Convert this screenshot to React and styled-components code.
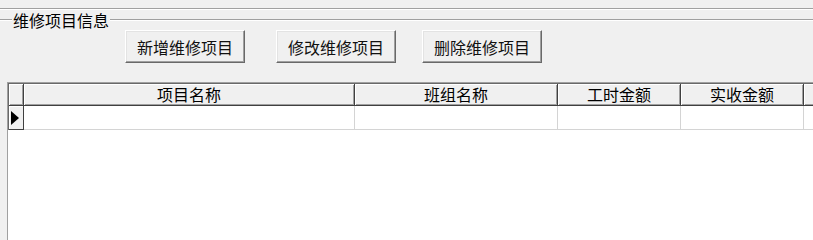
import React from "react";
import styled, { createGlobalStyle } from "styled-components";

const GlobalStyle = createGlobalStyle`
  html, body {
    margin: 0;
    padding: 0;
    height: 100%;
    overflow: hidden;
    background: #f0f0f0;
  }
  #root {
    height: 100%;
  }
`;

const columns = [
  { key: "name", title: "项目名称", width: 331 },
  { key: "team", title: "班组名称", width: 203 },
  { key: "hours", title: "工时金额", width: 123 },
  { key: "paid", title: "实收金额", width: 123 },
  { key: "extra", title: "", width: 100 },
];

const buttons = [
  { label: "新增维修项目", gap: 0 },
  { label: "修改维修项目", gap: 31 },
  { label: "删除维修项目", gap: 26 },
];

function App() {
  const template = ["15px", ...columns.map((c) => c.width + "px")].join(" ");
  return (
    <Page>
      <GlobalStyle />
      <TopRule />
      <GroupHeader>
        <Etch $width={12} />
        <GroupTitle>维修项目信息</GroupTitle>
        <Etch $grow />
      </GroupHeader>
      <ButtonRow>
        {buttons.map((b) => (
          <Button key={b.label} $gap={b.gap}>
            {b.label}
          </Button>
        ))}
      </ButtonRow>
      <Grid>
        <Rows $template={template}>
          <HeadCell />
          {columns.map((c) => (
            <HeadCell key={c.key}>{c.title}</HeadCell>
          ))}
          <Indicator>
            <Arrow />
          </Indicator>
          {columns.map((c) => (
            <DataCell key={c.key} />
          ))}
        </Rows>
      </Grid>
    </Page>
  );
}

export default App;

const Page = styled.div`
  height: 100%;
  display: flex;
  flex-direction: column;
  font-family: "Noto Sans CJK SC", "Liberation Sans", sans-serif;
  font-size: 16px;
  color: #000;
`;

const TopRule = styled.div`
  margin-top: 8px;
  height: 0;
  border-top: 1px solid #a0a0a0;
  border-bottom: 1px solid #ffffff;
`;

const GroupHeader = styled.div`
  display: flex;
  align-items: center;
  height: 18px;
  margin-top: 1px;
`;

const Etch = styled.div`
  height: 0;
  border-top: 1px solid #a0a0a0;
  border-bottom: 1px solid #ffffff;
  flex: ${(p) => (p.$grow ? 1 : "none")};
  width: ${(p) => (p.$width ? p.$width + "px" : "auto")};
`;

const GroupTitle = styled.span`
  line-height: 18px;
  padding: 0 1px;
`;

const ButtonRow = styled.div`
  display: flex;
  padding-left: 125px;
  margin-top: 1px;
`;

const Button = styled.button`
  box-sizing: border-box;
  width: 120px;
  height: 33px;
  margin-left: ${(p) => p.$gap}px;
  padding: 1px 0 0;
  font-family: inherit;
  font-size: 16px;
  color: #111;
  background: #f0f0f0;
  border: 1px solid;
  border-color: #ffffff #696969 #696969 #ffffff;
  box-shadow: inset -1px -1px 0 #a0a0a0, inset 1px 1px 0 #e3e3e3;
  cursor: pointer;
`;

const Grid = styled.div`
  flex: 1;
  margin-top: 19px;
  margin-left: 7px;
  background: #ffffff;
  border-left: 1px solid #a0a0a0;
  border-top: 1px solid #a0a0a0;
  overflow: hidden;
`;

const Rows = styled.div`
  display: grid;
  grid-template-columns: ${(p) => p.$template};
  grid-template-rows: 22px 24px;
  border-left: 1px solid #696969;
  border-top: 1px solid #696969;
  width: max-content;
`;

const HeadCell = styled.div`
  box-sizing: border-box;
  background: #f0f0f0;
  border-right: 1px solid #404040;
  border-bottom: 1px solid #404040;
  box-shadow: inset 1px 1px 0 #ffffff, inset -1px -1px 0 #a0a0a0;
  display: flex;
  align-items: center;
  justify-content: center;
  line-height: 20px;
  padding-bottom: 2px;
  white-space: nowrap;
`;

const Indicator = styled.div`
  box-sizing: border-box;
  background: #f0f0f0;
  border-right: 1px solid #404040;
  border-bottom: 1px solid #404040;
  box-shadow: inset 1px 1px 0 #ffffff;
  display: flex;
  align-items: center;
  padding-left: 2px;
`;

const Arrow = styled.span`
  width: 0;
  height: 0;
  border-top: 7px solid transparent;
  border-bottom: 7px solid transparent;
  border-left: 8px solid #000;
`;

const DataCell = styled.div`
  box-sizing: border-box;
  background: #ffffff;
  border-right: 1px solid #d4d4d4;
  border-bottom: 1px solid #d4d4d4;
`;
